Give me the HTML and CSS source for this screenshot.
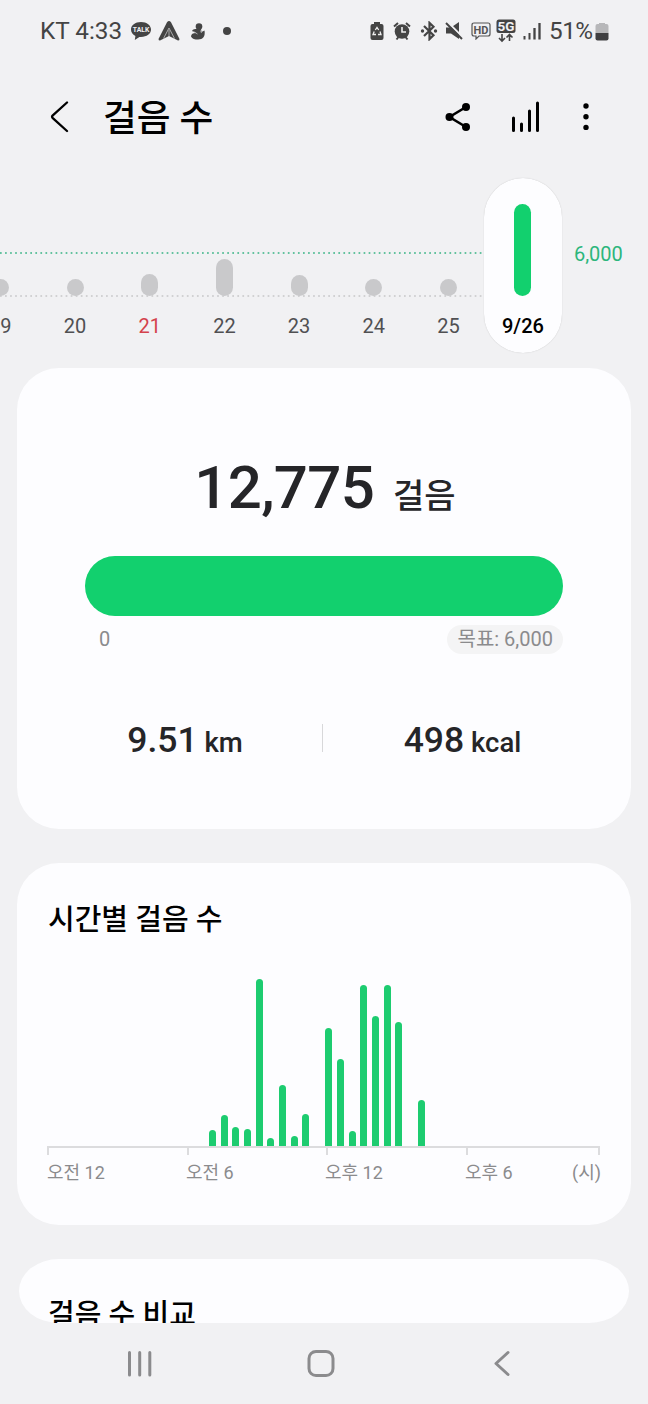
FILE: index.html
```html
<!DOCTYPE html>
<html lang="ko">
<head>
<meta charset="utf-8">
<title>걸음 수</title>
<link rel="stylesheet" href="styles.css">
</head>
<body>
<div class="status">
  <div class="status-left">
    <span class="status-text">KT 4:33</span>
    <svg class="ic-talk" width="22" height="20" viewBox="0 0 22 20"><path d="M11 1C5.200 1 1 4.300 1 8.600c0 2.800 1.700 5 4.400 6.300L4.800 19l4.600-3.100 1.600.1c5.800 0 10-3.200 10-7.400S16.800 1 11 1z" fill="#444"/><text x="11" y="11.200" text-anchor="middle" class="talk-label">TALK</text></svg>
    <svg class="ic-auto" width="22" height="20" viewBox="0 0 22 20"><path d="M9 1.200Q11-1 13 1.200L21.500 18Q21.500 19.500 20 19.500L11 15 2 19.500Q.5 19.500.5 18z" fill="#444"/><path d="M5.500 17.500L11 7l5.500 10.500M11 9v6" fill="none" stroke="#b5b5b7" stroke-width=".9"/></svg>
    <svg class="ic-duck" width="16" height="20" viewBox="0 0 16 20"><circle cx="9" cy="5.500" r="3.300" fill="#444"/><path d="M7 8C5 8 3 8 2 10l4 2c-3 0-5 1-5 3.500C2 18 5 18.500 8 18.500c5 0 7.500-3 6.500-9L11.500 11l-.5-3z" fill="#444"/><path d="M3.500 10.500l4 2.500M10.500 9.500l1 2.500" stroke="#c5c5c7" stroke-width=".8"/></svg>
    <span class="status-dot"></span>
  </div>
  <div class="status-right">
    <svg width="14" height="20" viewBox="0 0 14 20"><path d="M4 1h6v2h1.500Q13.500 3 13.500 5v12q0 2-2 2h-9Q.5 19 .5 17V5q0-2 2-2H4z" fill="#444"/><path d="M5.300 9l1.700-2.500L8.700 9M10 10.500l1 3H8M6 13.500H3l1.200-3" fill="none" stroke="#eee" stroke-width="1.300"/></svg>
    <svg class="ic-alarm" width="18" height="20" viewBox="0 0 18 20"><circle cx="9" cy="10.500" r="7.300" fill="#444"/><path d="M1 5.500l4-3.500M17 5.500l-4-3.500M3.500 18.500l2-2.500M14.500 18.500l-2-2.500" stroke="#444" stroke-width="2"/><path d="M9 6v5h4" fill="none" stroke="#eee" stroke-width="1.600"/></svg>
    <svg class="ic-bt" width="18" height="20" viewBox="0 0 18 20"><path d="M4 5l9.500 9.300-4 3.800V1.900l4 3.800L4 15" fill="none" stroke="#444" stroke-width="2.200"/><circle cx="2.500" cy="10" r="1.700" fill="#444"/><circle cx="15.500" cy="10" r="1.700" fill="#444"/></svg>
    <svg width="18" height="20" viewBox="0 0 18 20"><path d="M1 6.500h5L14 1v17l-8-5.500H1z" fill="#444"/><path d="M2.500 1l16 16" stroke="#f1f1f3" stroke-width="2"/><path d="M1 2l16 16" stroke="#444" stroke-width="2"/></svg>
    <svg class="ic-hd" width="20" height="18" viewBox="0 0 20 18"><path d="M3 1h14q2 0 2 2v9q0 2-2 2H8l-3 3v-3H3q-2 0-2-2V3q0-2 2-2z" fill="none" stroke="#555" stroke-width="1.200"/><text x="10" y="11.500" text-anchor="middle" class="hd-label">HD</text></svg>
    <svg class="ic-5g" width="20" height="24" viewBox="0 0 20 24"><rect x=".5" y=".5" width="19" height="13.500" rx="2.500" fill="#444"/><text x="10" y="12" text-anchor="middle" class="g-label">5G</text><path d="M6 15v6.500M3 19l3 3 3-3M13.500 22v-6.500M10.500 18.500l3-3 3 3" fill="none" stroke="#444" stroke-width="1.600"/></svg>
    <svg width="18" height="18" viewBox="0 0 18 18"><path d="M1.500 17.500v-3.500M6.500 17.500V11" stroke="#444" stroke-width="2"/><path d="M11.500 17.500V6M16.500 17.500V1" stroke="#444" stroke-width="2.300"/></svg>
    <span class="status-text pct">51%</span>
    <svg class="ic-batt" width="14" height="19" viewBox="0 0 14 19"><path d="M4 1h6v1h1.500q2 0 2 2v7H.5V4q0-2 2-2H4z" fill="#b7b7b9"/><path d="M.5 11h13v5.500q0 2-2 2h-9q-2 0-2-2z" fill="#3f3f41"/></svg>
  </div>
</div>

<header class="header">
  <svg class="back" width="20" height="34" viewBox="0 0 20 34"><path d="M17 2.500L2.800 15.300q-1.400 1.400 0 2.800L17 31" fill="none" stroke="#000" stroke-width="2.300" stroke-linecap="round"/></svg>
  <h1 class="title">걸음 수</h1>
  <svg class="share" width="26" height="30" viewBox="0 0 26 30"><path d="M21 5L4.500 15 21 25" fill="none" stroke="#000" stroke-width="2.600"/><circle cx="21" cy="5" r="4" fill="#000"/><circle cx="4.500" cy="15" r="4" fill="#000"/><circle cx="21" cy="25" r="4" fill="#000"/></svg>
  <svg class="trend" width="30" height="32" viewBox="0 0 30 32"><path d="M2.500 17v12.500M10.500 23v6.500M18.500 10v19.500M26.500 2v27.500" stroke="#000" stroke-width="3" stroke-linecap="round"/></svg>
  <svg class="more" width="8" height="30" viewBox="0 0 8 30"><circle cx="4" cy="4" r="2.700"/><circle cx="4" cy="14.700" r="2.700"/><circle cx="4" cy="25.400" r="2.700"/></svg>
</header>

<section class="days">
  <svg class="guides" width="484" height="48" viewBox="0 0 484 48"><path d="M0 2H484" stroke="#35b283" stroke-width="1.700" stroke-dasharray="1.700 3.350"/><path d="M0 45H484" stroke="#c6c6c8" stroke-width="1.500" stroke-dasharray="1.700 3.350"/></svg>
  <div class="day"><i class="pill h17"></i><span>19</span></div>
  <div class="day"><i class="pill h17"></i><span>20</span></div>
  <div class="day sunday"><i class="pill h22"></i><span>21</span></div>
  <div class="day"><i class="pill h37"></i><span>22</span></div>
  <div class="day"><i class="pill h21"></i><span>23</span></div>
  <div class="day"><i class="pill h17"></i><span>24</span></div>
  <div class="day"><i class="pill h17"></i><span>25</span></div>
  <div class="day today"><i class="pill h92"></i><span>9/26</span></div>
  <div class="goal-label">6,000</div>
</section>

<main class="cards">
  <section class="card summary">
    <div class="count"><span class="num">12,775</span><span class="unit">걸음</span></div>
    <div class="progress"></div>
    <div class="range"><span>0</span><span class="goal">목표: 6,000</span></div>
    <div class="stats">
      <div class="stat"><b>9.51</b> km</div>
      <i class="divider"></i>
      <div class="stat"><b>498</b> kcal</div>
    </div>
  </section>

  <section class="card hourly">
    <h2>시간별 걸음 수</h2>
    <div class="bars">
      <i style="height:16px"></i><i style="height:31px"></i><i style="height:19px"></i><i style="height:17px"></i><i style="height:167px"></i><i style="height:8px"></i><i style="height:61px"></i><i style="height:10px"></i><i style="height:32px"></i><i style="height:0"></i><i style="height:118px"></i><i style="height:87px"></i><i style="height:15px"></i><i style="height:161px"></i><i style="height:130px"></i><i style="height:161px"></i><i style="height:124px"></i><i style="height:0"></i><i style="height:46px"></i>
    </div>
    <div class="axis"><i></i><i></i><i></i><i class="last"></i></div>
    <div class="hours"><span>오전 12</span><span>오전 6</span><span>오후 12</span><span>오후 6</span><span>(시)</span></div>
  </section>

  <section class="card compare"><h2>걸음 수 비교</h2></section>
</main>

<nav class="nav">
  <svg width="26" height="28" viewBox="0 0 26 28"><path d="M2.500 2.500v22.500M12.700 2.500v22.500M22.800 2.500v22.500" stroke="#8b8b8d" stroke-width="3" stroke-linecap="round"/></svg>
  <svg class="home" width="28" height="28" viewBox="0 0 28 28"><rect x="2" y="1.500" width="24" height="24" rx="7" fill="none" stroke="#8b8b8d" stroke-width="3"/></svg>
  <svg width="18" height="28" viewBox="0 0 18 28"><path d="M14 2.500L2 13.500l12 11" fill="none" stroke="#8b8b8d" stroke-width="3" stroke-linecap="round" stroke-linejoin="round"/></svg>
</nav>
</body>
</html>
```

FILE: styles.css
```css
* { box-sizing: border-box; }
body {
  margin: 0;
  width: 648px;
  height: 1404px;
  overflow: hidden;
  display: flex;
  flex-direction: column;
  background: #f1f1f3;
  color: #000;
  font-family: Roboto, "Noto Sans CJK KR", sans-serif;
}
svg { display: block; flex: none; }
h1, h2 { margin: 0; font-weight: 500; }

.status { flex: none; height: 62px; padding: 0 39px 0 40px; display: flex; justify-content: space-between; align-items: center; color: #444; }
.status-left, .status-right { display: flex; align-items: center; }
.status-text { font-size: 24.300px; line-height: 30px; }
.ic-talk { margin-left: 8px; }
.ic-auto { margin-left: 6px; }
.ic-duck { margin-left: 10px; }
.status-dot { width: 8px; height: 8px; margin-left: 17px; border-radius: 50%; background: #444; }
.talk-label { font: 700 6.800px Roboto, sans-serif; fill: #f1f1f3; }
.hd-label { font: 700 11px Roboto, sans-serif; fill: #555; }
.g-label { font: 700 13.500px Roboto, sans-serif; fill: #f1f1f3; }
.status-right { gap: 7px; }
.ic-alarm, .ic-bt { margin-left: 2px; }
.ic-hd { margin-left: 1px; }
.ic-5g { margin-left: -2px; }
.pct { width: 42px; margin-left: 1px; letter-spacing: -0.500px; }
.ic-batt { margin-left: -3px; }

.header { flex: none; height: 110px; padding: 0 58px 0 50px; display: flex; align-items: center; }
.title { margin: 3px 0 0 33px; font-size: 36.700px; line-height: 44px; }
.share { margin-left: auto; }
.trend { margin-left: 40px; }
.more { margin-left: 41px; }

.days { position: relative; flex: none; height: 196px; display: flex; }
.guides { position: absolute; left: 0; top: 79px; }
.day { position: relative; flex: none; width: 74.700px; height: 175px; margin-top: 6px; padding-bottom: 15px; display: flex; flex-direction: column; align-items: center; justify-content: flex-end; color: #505052; font-size: 20px; line-height: 24px; }
.day:nth-child(2) { margin-left: -37px; }
.day span { margin-top: 18px; }
.pill { width: 17px; border-radius: 9px; background: #c9c9cb; }
.h17 { height: 17px; }
.h21 { height: 21px; }
.h22 { height: 22px; }
.h37 { height: 37px; }
.h92 { height: 92px; }
.sunday { color: #d4424c; }
.today { width: 78px; margin-left: -1.900px; border-radius: 39px; background: #fdfdff; box-shadow: 0 0 1px #bbb; color: #000; font-weight: 500; }
.today .pill { background: #12d06e; }
.goal-label { margin: 70px 0 0 12px; color: #2cb67c; font-size: 20px; line-height: 24px; }

.cards { flex: none; height: 955px; padding: 0 17px; display: flex; flex-direction: column; gap: 34px; overflow: hidden; }
.card { flex: none; border-radius: 42px; background: #fdfdff; }
.summary { height: 461px; padding: 85px 68px 0; color: #252528; }
.count { height: 70px; padding-left: 2px; display: flex; justify-content: center; align-items: baseline; font-weight: 500; }
.num { font-size: 60px; line-height: 70px; letter-spacing: -0.700px; }
.unit { margin-left: 19px; font-size: 34px; }
.progress { height: 60px; margin-top: 33px; border-radius: 30px; background: #12d06e; }
.range { margin-top: 9px; padding-left: 14px; display: flex; justify-content: space-between; color: #8b8b8d; font-size: 20px; line-height: 29px; }
.goal { padding: 0 10px; border-radius: 15px; background: #f4f4f5; }
.stats { margin: 62px -39px 0 -37px; display: grid; grid-template-columns: 274px 1px 1fr; align-items: center; font-weight: 500; font-size: 27.500px; line-height: 48px; }
.stat { text-align: center; }
.stat b { font-size: 35.500px; font-weight: 500; }
.divider { height: 28px; margin-top: -7px; background: #d8d8da; }

.hourly { height: 362px; padding: 38px 30px 0; }
h2 { font-size: 29px; line-height: 38px; }
.hourly h2 { padding-left: 1px; }
.bars { height: 207px; padding-left: 162.200px; display: flex; align-items: flex-end; gap: 4.630px; }
.bars i { width: 7px; border-radius: 4px 4px 0 0; background: #1dcc70; }
.axis { height: 9px; width: 553px; border-top: 2px solid #dcdcde; display: flex; }
.axis i { width: 139.500px; border-left: 2px solid #dcdcde; }
.axis .last { flex: 1; border-right: 2px solid #dcdcde; }
.hours { margin-top: 4px; display: grid; grid-template-columns: 139px 139px 140px 1fr auto; width: 554px; color: #8b8b8d; font-size: 18px; line-height: 27px; }
.compare { height: 64px; margin: 0 2px; padding: 37px 29px 0; border-radius: 40px / 32px; }
.compare h2 { line-height: 38px; }

.nav { flex: none; height: 81px; padding: 0 136px 0 127px; display: flex; align-items: center; justify-content: space-between; }
.home { margin-right: 5px; }
```
